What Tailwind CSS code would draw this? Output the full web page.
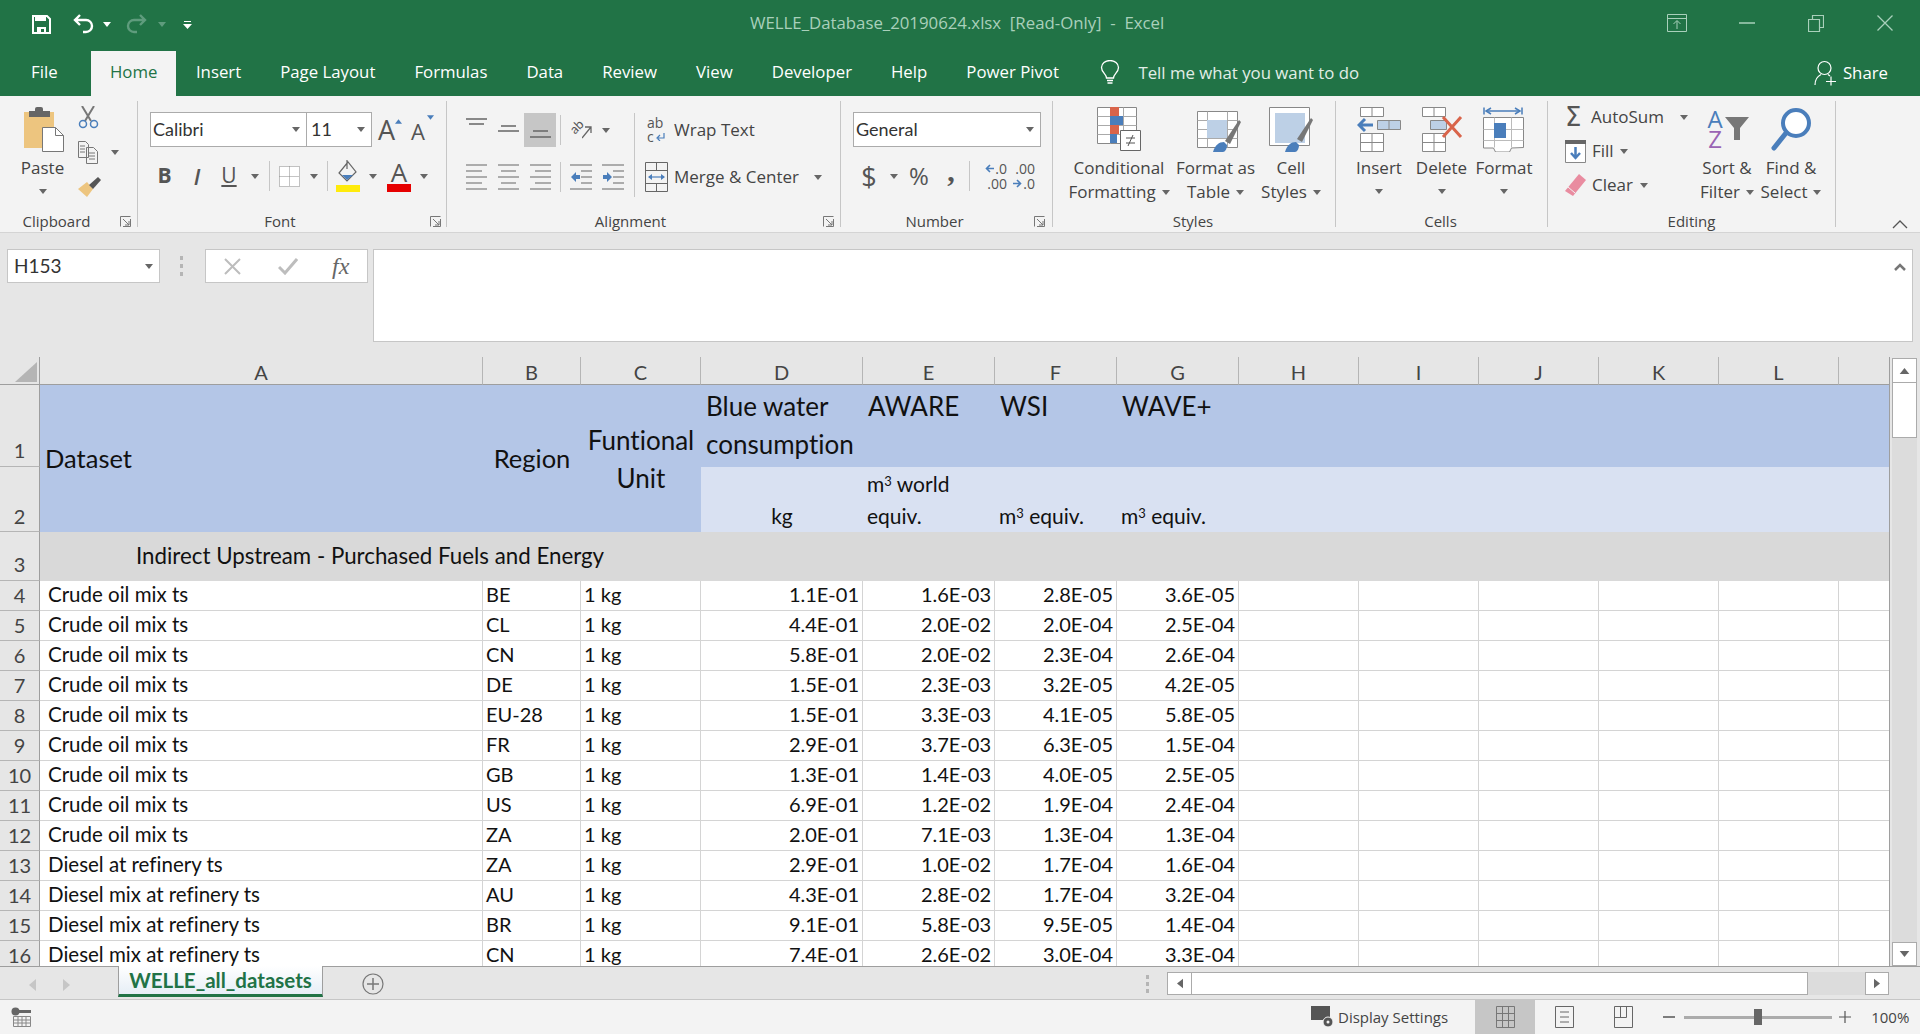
<!DOCTYPE html>
<html lang="en">
<head>
  <meta charset="UTF-8" />
  <title>WELLE_Database_20190624.xlsx [Read-Only] - Excel</title>
  <script src="https://cdn.jsdelivr.net/npm/@tailwindcss/browser@4"></script>
</head>
<body class="bg-[#f3f3f3] overflow-hidden font-['Open_Sans',sans-serif] text-[17px] text-[#444]">
  <!-- shared little glyphs -->
  <svg class="hidden">
    <symbol id="launcher" viewBox="0 0 11 11"><path d="M.5 10.500V.5h10M3 3l6 6M9 5v4H5M10.500 3v7.500H3" fill="none" stroke="#777"/></symbol>
  </svg>

  <div class="flex flex-col w-[1920px] h-[1034px]">
    <!-- title bar -->
    <div class="bg-[#217346] h-[96px] shrink-0 flex flex-col text-white">
      <div class="h-[51px] flex items-center relative">
        <svg class="ml-[32px] w-[19px] h-[19px] -mt-[3px]" viewBox="0 0 19 19"><path d="M1 1h14l3 3v14H1z" fill="none" stroke="#fff" stroke-width="2"/><path d="M3 1h11v5H3zM5 12h9v6h-2v-4H9v4H5z" fill="#fff"/></svg>
        <svg class="ml-[22px] w-[21px] h-[21px] -mt-[3px]" viewBox="0 0 21 21"><path d="M7 1 2 6l5 5M2 6h11a5.500 5.500 0 0 1 0 12h-3" fill="none" stroke="#fff" stroke-width="2.400"/></svg>
        <svg class="ml-[9px] w-[8px] h-[5px] -mt-[2px]"><path d="M0 0h8L4 5z" fill="#fff"/></svg>
        <svg class="ml-[15px] w-[21px] h-[21px] -mt-[3px]" viewBox="0 0 21 21"><path d="M14 1l5 5-5 5M19 6H8a5.500 5.500 0 0 0 0 12h3" fill="none" stroke="#5f9c7d" stroke-width="2.400"/></svg>
        <svg class="ml-[11px] w-[8px] h-[5px] -mt-[2px]"><path d="M0 0h8L4 5z" fill="#5f9c7d"/></svg>
        <svg class="ml-[17px] w-[9px] h-[9px] -mt-[2px]" viewBox="0 0 9 9"><path d="M1 1h7v1H1zM0 4h9L4.500 9z" fill="#fff"/></svg>
        <div class="ml-[558px] -mt-[5px] text-[#a9d0bb] text-[16.800px] whitespace-pre">WELLE_Database_20190624.xlsx  [Read-Only]  -  Excel</div>
        <div class="ml-auto flex items-center -mt-[5px] pr-[27px]">
          <svg class="w-[20px] h-[18px]" viewBox="0 0 20 18"><path d="M.5.500h19v17H.5zM.5 4.500h19M10 15V7M6.500 10 10 6.500l3.500 3.500" fill="none" stroke="#a9d0bb"/></svg>
          <svg class="ml-[52px] w-[16px] h-[2px]" viewBox="0 0 16 2"><path d="M0 1h16" stroke="#a9d0bb" stroke-width="1.500"/></svg>
          <svg class="ml-[53px] w-[16px] h-[17px]" viewBox="0 0 16 17"><path d="M.5 4.500h11v12H.5zM4.500 4.500V.5h11v12h-4" fill="none" stroke="#a9d0bb" stroke-width="1.200"/></svg>
          <svg class="ml-[53px] w-[16px] h-[16px]" viewBox="0 0 16 16"><path d="m.5.500 15 15M15.500.5l-15 15" stroke="#a9d0bb" stroke-width="1.300"/></svg>
        </div>
      </div>
      <div class="h-[45px] flex items-stretch pl-[12px] text-[16.800px] leading-[42px]">
        <div class="w-[79px] pl-[19px]">File</div>
        <div class="px-[19px] bg-[#f3f3f3] text-[#217346]">Home</div>
        <div class="px-[19.500px]">Insert</div>
        <div class="px-[19.500px]">Page Layout</div>
        <div class="px-[19.500px]">Formulas</div>
        <div class="px-[19.500px]">Data</div>
        <div class="px-[19.500px]">Review</div>
        <div class="px-[19.500px]">View</div>
        <div class="px-[19.500px]">Developer</div>
        <div class="px-[19.500px]">Help</div>
        <div class="px-[19.500px]">Power Pivot</div>
        <div class="ml-[22px] flex items-center -mt-[2px]">
          <svg class="w-[20px] h-[26px]" viewBox="0 0 20 26"><path d="M6.500 18c0-4-5-5.500-5-10.500a8.500 7 0 0 1 17 0c0 5-5 6.500-5 10.500z" fill="none" stroke="#fff" stroke-width="1.300"/><path d="M7 20.500h6M7.500 23h5" stroke="#fff" stroke-width="1.500"/></svg>
          <span class="ml-[18px] text-[#e1eee7]">Tell me what you want to do</span>
        </div>
        <div class="ml-auto flex items-center pr-[32px] -mt-[1px]">
          <svg class="w-[22px] h-[26px]" viewBox="0 0 22 26"><circle cx="10.500" cy="8" r="6.500" fill="none" stroke="#fff" stroke-width="1.200"/><path d="M1 25c0-6 3-9 6-10.500M14 14.500l2 1.500M12 21.500h10M17 16.500v9" fill="none" stroke="#fff" stroke-width="1.200"/></svg>
          <span class="ml-[7px]">Share</span>
        </div>
      </div>
    </div>

    <!-- ribbon -->
    <div class="h-[137px] shrink-0 flex border-b border-[#d4d4d4] pt-[5px]">
      <!-- clipboard -->
      <div class="w-[138px] h-[126px] border-r border-[#c6c6c6] shrink-0 flex flex-col">
        <div class="h-[110px] shrink-0 flex">
          <div class="ml-[7px] w-[71px] flex flex-col items-center pt-[6px]">
            <svg class="w-[42px] h-[45px]" viewBox="0 0 42 45"><path d="M2 5h30v36H2z" fill="#edc57f"/><rect x="7" y="4" width="21" height="6" fill="#666"/><rect x="13" y="0" width="8" height="6" rx="2" fill="#666"/><path d="M20.500 20.500h13l8 8v16h-21z" fill="#fff" stroke="#777"/><path d="M33.500 20.500v8h8" fill="none" stroke="#777"/></svg>
            <div class="leading-[24px] mt-[4px]">Paste</div>
            <svg class="w-[8px] h-[5px] mt-[9px]"><path d="M0 0h8L4 5z" fill="#666"/></svg>
          </div>
          <div class="flex flex-col pt-[5px]">
            <svg class="w-[21px] h-[23px]" viewBox="0 0 21 23"><path d="M4 0l9 15M16 0 7 15" stroke="#777" stroke-width="2"/><circle cx="5" cy="18" r="3.500" fill="none" stroke="#4a7ebb" stroke-width="1.500"/><circle cx="16" cy="18" r="3.500" fill="none" stroke="#4a7ebb" stroke-width="1.500"/></svg>
            <div class="flex items-center mt-[12px]">
              <svg class="w-[21px] h-[23px]" viewBox="0 0 21 23"><path d="M.5.500h7l3 3v13h-10zM8.500 6.500h7l4 4v12h-11z" fill="#f3f3f3" stroke="#777"/><path d="M2 5h5M2 8h5M2 11h5M11 12h6M11 15h6M11 18h6" stroke="#777"/></svg>
              <svg class="ml-[12px] w-[8px] h-[5px]"><path d="M0 0h8L4 5z" fill="#666"/></svg>
            </div>
            <svg class="mt-[13px] w-[23px] h-[21px]" viewBox="0 0 23 21"><path d="M0 12 9 5l6 7-6 8z" fill="#edc57f"/><path d="m11 8 9-8 3 3-8 9z" fill="#555"/></svg>
          </div>
        </div>
        <div class="h-[20px] shrink-0 relative flex items-center justify-center text-[15px] pr-[24px]">Clipboard
          <svg class="absolute right-[6px] top-[5px] w-[11px] h-[11px]"><use href="#launcher"/></svg>
        </div>
      </div>

      <!-- font -->
      <div class="w-[309px] h-[126px] border-r border-[#c6c6c6] shrink-0 flex flex-col">
        <div class="h-[110px] shrink-0 pl-[12px] pt-[11px]">
          <div class="flex items-center h-[35px]">
            <div class="w-[157px] h-[35px] bg-white border border-[#ababab] flex items-center justify-between pl-[2px] pr-[6px] text-[#333]"><span class="font-['Lato',sans-serif] text-[18px]">Calibri</span><svg class="w-[8px] h-[5px]"><path d="M0 0h8L4 5z" fill="#666"/></svg></div>
            <div class="w-[65px] h-[35px] bg-white border border-l-0 border-[#ababab] flex items-center justify-between pl-[4px] pr-[6px] text-[#333]"><span class="font-['Lato',sans-serif] text-[18px]">11</span><svg class="w-[8px] h-[5px]"><path d="M0 0h8L4 5z" fill="#666"/></svg></div>
            <div class="ml-[6px] w-[21px] relative text-[27px] text-[#555] leading-none -mt-[1px]">A<svg class="absolute right-[-3px] top-[3px] w-[7px] h-[5px]" viewBox="0 0 8 5"><path d="M0 5h8L4 0z" fill="#4a7ebb"/></svg></div>
            <div class="ml-[12px] w-[20px] relative text-[22px] text-[#555] leading-none pt-[2px]">A<svg class="absolute right-[-3px] top-[-3px] w-[7px] h-[5px]" viewBox="0 0 8 5"><path d="M0 0h8L4 5z" fill="#4a7ebb"/></svg></div>
          </div>
          <div class="flex items-center h-[32px] mt-[13px] -ml-[2px] text-[#555]">
            <div class="w-[33px] text-center font-bold text-[21px]">B</div>
            <div class="w-[32px] text-center italic font-semibold text-[22px]">I</div>
            <div class="w-[32px] text-center underline text-[21px]">U</div>
            <div class="w-[20px] flex justify-center"><svg class="w-[8px] h-[5px]"><path d="M0 0h8L4 5z" fill="#666"/></svg></div>
            <div class="ml-[4px] w-px h-[30px] bg-[#c6c6c6]"></div>
            <svg class="ml-[9px] w-[21px] h-[21px]" viewBox="0 0 21 21"><path d="M.5.500h20v20H.5zM10.500.500v20M.5 10.500h20" fill="#fff" stroke="#888" stroke-dasharray="1 1"/></svg>
            <svg class="ml-[10px] w-[8px] h-[5px]"><path d="M0 0h8L4 5z" fill="#666"/></svg>
            <div class="ml-[9px] w-px h-[30px] bg-[#c6c6c6]"></div>
            <svg class="ml-[8px] w-[24px] h-[32px]" viewBox="0 0 24 32"><path d="M12 2 3 13l8 8 9-9zM11 0v9" fill="none" stroke="#666" stroke-width="1.200"/><path d="M6 15h11l-6 5z" fill="#4a7ebb"/><path d="M0 25h24v7H0z" fill="#ffeb0c"/></svg>
            <svg class="ml-[9px] w-[8px] h-[5px]"><path d="M0 0h8L4 5z" fill="#666"/></svg>
            <div class="ml-[10px] w-[24px] h-[32px] flex flex-col items-center text-[26px] leading-[24px] text-[#555]">A<div class="w-[24px] h-[8px] bg-[#e60000]"></div></div>
            <svg class="ml-[9px] w-[8px] h-[5px]"><path d="M0 0h8L4 5z" fill="#666"/></svg>
          </div>
        </div>
        <div class="h-[20px] shrink-0 relative flex items-center justify-center text-[15px] pr-[24px]">Font
          <svg class="absolute right-[5px] top-[5px] w-[11px] h-[11px]"><use href="#launcher"/></svg>
        </div>
      </div>

      <!-- alignment -->
      <div class="w-[394px] h-[126px] border-r border-[#c6c6c6] shrink-0 flex flex-col">
        <div class="h-[110px] shrink-0 flex pl-[13px] pt-[12px]">
          <div class="w-[175px] flex flex-col border-r border-[#c6c6c6] h-[84px]">
            <div class="flex items-center h-[34px]">
              <div class="w-[32px] h-[34px] flex justify-center items-start pt-[5px]"><svg class="w-[21px] h-[12px]" viewBox="0 0 21 12"><path d="M0 1h21M3 6h15" stroke="#666" stroke-width="1.300"/></svg></div>
              <div class="w-[32px] h-[34px] flex justify-center items-center"><svg class="w-[21px] h-[12px]" viewBox="0 0 21 12"><path d="M3 2h15M0 7h21" stroke="#666" stroke-width="1.300"/></svg></div>
              <div class="w-[32px] h-[34px] bg-[#c6c6c6] flex justify-center items-end pb-[9px]"><svg class="w-[21px] h-[12px]" viewBox="0 0 21 12"><path d="M3 5h15M0 11h21" stroke="#666" stroke-width="1.300"/></svg></div>
              <div class="ml-[4px] w-px h-[30px] bg-[#c6c6c6]"></div>
              <div class="ml-[10px] w-[22px] h-[24px] flex">
                <span class="text-[13px] leading-[15px] text-[#555] -rotate-45 font-['Lato',sans-serif] ml-[2px]">ab</span>
                <svg class="w-[10px] h-[24px] -ml-[5px]" viewBox="0 0 10 24"><path d="M0 20 9 9M9 15V9H3" fill="none" stroke="#666" stroke-width="1.300"/></svg>
              </div>
              <svg class="ml-[9px] w-[8px] h-[5px]"><path d="M0 0h8L4 5z" fill="#666"/></svg>
            </div>
            <div class="flex items-center h-[32px] mt-[14px]">
              <div class="w-[32px] flex justify-center"><svg class="w-[21px] h-[26px]" viewBox="0 0 21 26"><path d="M0 1h21M0 7h16M0 13h21M0 19h16M0 25h21" stroke="#666" stroke-width="1.200"/></svg></div>
              <div class="w-[32px] flex justify-center"><svg class="w-[21px] h-[26px]" viewBox="0 0 21 26"><path d="M0 1h21M3 7h15M0 13h21M3 19h15M0 25h21" stroke="#666" stroke-width="1.200"/></svg></div>
              <div class="w-[32px] flex justify-center"><svg class="w-[21px] h-[26px]" viewBox="0 0 21 26"><path d="M0 1h21M5 7h16M0 13h21M5 19h16M0 25h21" stroke="#666" stroke-width="1.200"/></svg></div>
              <div class="ml-[4px] w-px h-[30px] bg-[#c6c6c6]"></div>
              <svg class="ml-[9px] w-[22px] h-[26px]" viewBox="0 0 22 26"><path d="M0 1h22M11 7h11M11 13h11M11 19h11M0 25h22" stroke="#666" stroke-width="1.200"/><path d="M6 8 1 13l5 5v-3h4v-4H6z" fill="#4a7ebb"/></svg>
              <svg class="ml-[10px] w-[22px] h-[26px]" viewBox="0 0 22 26"><path d="M0 1h22M11 7h11M11 13h11M11 19h11M0 25h22" stroke="#666" stroke-width="1.200"/><path d="M5 8l5 5-5 5v-3H1v-4h4z" fill="#4a7ebb"/></svg>
            </div>
          </div>
          <div class="flex flex-col pl-[10px]">
            <div class="flex items-center h-[34px] pl-[2px]">
              <div class="w-[20px] h-[28px] flex flex-col text-[14px] leading-[14px] text-[#555]">
                <span>ab</span>
                <div class="flex items-center">c<svg class="ml-[2px] w-[9px] h-[8px]" viewBox="0 0 9 8"><path d="M8 0v5H2M4 2 1 5l3 3" fill="none" stroke="#4a7ebb" stroke-width="1.200"/></svg></div>
              </div>
              <span class="ml-[7px]">Wrap Text</span>
            </div>
            <div class="flex items-center h-[32px] mt-[14px]">
              <svg class="w-[23px] h-[30px]" viewBox="0 0 23 30"><path d="M.5.500h22v29H.5zM.5 8.500h22M.5 21.500h22M11.500.500v8M11.500 21.500v8" fill="none" stroke="#666"/><path d="M4 15h15" stroke="#4a7ebb" stroke-width="1.200"/><path d="M7 12l-4 3 4 3zM16 12l4 3-4 3z" fill="#4a7ebb"/></svg>
              <span class="ml-[6px]">Merge &amp; Center</span>
              <svg class="ml-[15px] w-[8px] h-[5px]"><path d="M0 0h8L4 5z" fill="#666"/></svg>
            </div>
          </div>
        </div>
        <div class="h-[20px] shrink-0 relative flex items-center justify-center text-[15px] pr-[26px]">Alignment
          <svg class="absolute right-[6px] top-[5px] w-[11px] h-[11px]"><use href="#launcher"/></svg>
        </div>
      </div>

      <!-- number -->
      <div class="w-[212px] h-[126px] border-r border-[#c6c6c6] shrink-0 flex flex-col">
        <div class="h-[110px] shrink-0 pl-[12px] pt-[11px]">
          <div class="w-[188px] h-[35px] bg-white border border-[#ababab] flex items-center justify-between pl-[2px] pr-[6px] text-[#333]"><span class="font-['Lato',sans-serif] text-[18px]">General</span><svg class="w-[8px] h-[5px]"><path d="M0 0h8L4 5z" fill="#666"/></svg></div>
          <div class="flex items-center h-[32px] mt-[13px] text-[#555]">
            <div class="w-[32px] text-center text-[27px] leading-none">$</div>
            <svg class="ml-[5px] w-[8px] h-[5px]"><path d="M0 0h8L4 5z" fill="#666"/></svg>
            <div class="ml-[6px] w-[30px] text-center text-[24px] leading-none">%</div>
            <div class="ml-[7px] w-[20px] text-center text-[30px] font-bold leading-none -mt-[10px] font-['Liberation_Serif',serif]">,</div>
            <div class="ml-[8px] w-px h-[30px] bg-[#c6c6c6]"></div>
            <div class="ml-[9px] w-[28px] flex flex-col items-end text-[14px] leading-[15px] whitespace-nowrap">
              <div class="flex items-center"><svg class="w-[9px] h-[9px] mr-[1px]" viewBox="0 0 9 9"><path d="M9 4.500H2M5 1 1.500 4.500 5 8" fill="none" stroke="#4a7ebb" stroke-width="1.600"/></svg>.0</div>
              <div>.00</div>
            </div>
            <div class="ml-[2px] w-[26px] flex flex-col items-end text-[14px] leading-[15px] whitespace-nowrap">
              <div>.00</div>
              <div class="flex items-center"><svg class="w-[9px] h-[9px] mr-[1px]" viewBox="0 0 9 9"><path d="M0 4.500h7M4 1l3.500 3.500L4 8" fill="none" stroke="#4a7ebb" stroke-width="1.600"/></svg>.0</div>
            </div>
          </div>
        </div>
        <div class="h-[20px] shrink-0 relative flex items-center justify-center text-[15px] pr-[24px]">Number
          <svg class="absolute right-[7px] top-[5px] w-[11px] h-[11px]"><use href="#launcher"/></svg>
        </div>
      </div>

      <!-- styles -->
      <div class="w-[283px] h-[126px] border-r border-[#c6c6c6] shrink-0 flex flex-col">
        <div class="h-[110px] shrink-0 flex pl-[17px] pt-[6px] text-center leading-[24px]">
          <div class="w-[98px] flex flex-col items-center">
            <svg class="w-[44px] h-[45px]" viewBox="0 0 44 45"><path d="M.5.500h39v36H.5z" fill="#fff" stroke="#888"/><path d="M.5 9.500h39M.5 18.500h39M.5 27.500h39M13.500.500v36M26.500.500v36" stroke="#aaa"/><path d="M13 0h9v9h-9z M13 18h9v9h-9z" fill="#d9644a"/><path d="M13 9h13v9H13zM13 27h7v9h-7z" fill="#4a7ebb"/><path d="M23.500 23.500h20v20h-20z" fill="#fff" stroke="#666"/><path d="M29 31h9M29 36h9M36 28l-5 11" stroke="#555"/></svg>
            <div class="mt-[4px]">Conditional</div>
            <div class="flex items-center whitespace-nowrap">Formatting<svg class="ml-[6px] w-[8px] h-[5px]"><path d="M0 0h8L4 5z" fill="#666"/></svg></div>
          </div>
          <div class="w-[95px] flex flex-col items-center">
            <svg class="w-[44px] h-[45px] ml-[6px]" viewBox="0 0 44 45"><path d="M.5 4.500h40v36H.5z" fill="#fff" stroke="#888"/><path d="M.5 13.500h40M.5 22.500h40M.5 31.500h40M10.500 4.500v36M30.500 4.500v36" stroke="#aaa"/><path d="M10 13h20v18H10z" fill="#bdd0e6"/><path d="m28 34 14-21 2 2-11 22z" fill="#777"/><path d="M16 45c2-7 6-10 11-10l3 3c0 4-2 7-4 7z" fill="#4a7ebb"/></svg>
            <div class="mt-[4px] whitespace-nowrap">Format as</div>
            <div class="flex items-center">Table<svg class="ml-[6px] w-[8px] h-[5px]"><path d="M0 0h8L4 5z" fill="#666"/></svg></div>
          </div>
          <div class="w-[56px] flex flex-col items-center">
            <svg class="w-[44px] h-[45px]" viewBox="0 0 44 45"><path d="M.5.500h40v38H.5z" fill="#fff" stroke="#888"/><path d="M6 6h30v30H6z" fill="#bdd0e6"/><path d="m28 32 14-21 2 2-11 22z" fill="#777"/><path d="M16 45c2-7 6-10 11-10l3 3c0 4-2 7-4 7z" fill="#4a7ebb"/></svg>
            <div class="mt-[4px]">Cell</div>
            <div class="flex items-center">Styles<svg class="ml-[6px] w-[8px] h-[5px]"><path d="M0 0h8L4 5z" fill="#666"/></svg></div>
          </div>
        </div>
        <div class="h-[20px] shrink-0 flex items-center justify-center text-[15px] pr-[2px]">Styles</div>
      </div>

      <!-- cells -->
      <div class="w-[212px] h-[126px] border-r border-[#c6c6c6] shrink-0 flex flex-col">
        <div class="h-[110px] shrink-0 flex pl-[12px] pt-[6px] text-center leading-[24px]">
          <div class="w-[62px] flex flex-col items-center">
            <svg class="w-[44px] h-[45px]" viewBox="0 0 44 45"><path d="M3.500.500h23v9h-23zM15 .5v9M3.500 26.500h23v18h-23zM15 26.500v18M3.500 35.500h23" fill="#fff" stroke="#888"/><path d="M20.500 13.500h23v9h-23zM32 13.500v9" fill="#bdd0e6" stroke="#888"/><path d="M16 18H4M8 12l-6 6 6 6" fill="none" stroke="#4a7ebb" stroke-width="3"/></svg>
            <div class="mt-[4px]">Insert</div>
            <svg class="mt-[9px] w-[8px] h-[5px]"><path d="M0 0h8L4 5z" fill="#666"/></svg>
          </div>
          <div class="w-[63px] flex flex-col items-center">
            <svg class="w-[44px] h-[45px]" viewBox="0 0 44 45"><path d="M2.500.500h23v9h-23zM14 .5v9M2.500 26.500h23v18h-23zM14 26.500v18M2.500 35.500h23" fill="#fff" stroke="#888"/><path d="M10.500 13.500h16v9h-16z" fill="#bdd0e6" stroke="#888"/><path d="m23 10 18 20M41 10 23 30" stroke="#d9644a" stroke-width="3"/></svg>
            <div class="mt-[4px]">Delete</div>
            <svg class="mt-[9px] w-[8px] h-[5px]"><path d="M0 0h8L4 5z" fill="#666"/></svg>
          </div>
          <div class="w-[62px] flex flex-col items-center">
            <svg class="w-[42px] h-[45px]" viewBox="0 0 42 45"><path d="M4 4h32M1 .5v7M39 .5v7" stroke="#4a7ebb" stroke-width="1.500"/><path d="M8 1 3 4l5 3M32 1l5 3-5 3" fill="none" stroke="#4a7ebb" stroke-width="1.500"/><path d="M.5 10.500h40v30l-12 .5-2 4h-14l-2-4h-10z" fill="#fff" stroke="#888"/><path d="M.5 22.500h40M.5 33.500h40M11.500 10.500v30M28.500 10.500v30" stroke="#bbb"/><path d="M11 16h12v15H11z" fill="#4a7ebb"/></svg>
            <div class="mt-[4px]">Format</div>
            <svg class="mt-[9px] w-[8px] h-[5px]"><path d="M0 0h8L4 5z" fill="#666"/></svg>
          </div>
        </div>
        <div class="h-[20px] shrink-0 flex items-center justify-center text-[15px] pr-[2px]">Cells</div>
      </div>

      <!-- editing -->
      <div class="w-[288px] h-[126px] border-r border-[#c6c6c6] shrink-0 flex flex-col">
        <div class="h-[110px] shrink-0 flex">
          <div class="w-[147px] pl-[17px] flex flex-col -mt-[1px]">
            <div class="h-[34px] flex items-center">
              <span class="w-[19px] text-[26px] leading-none text-[#555] font-['DejaVu_Sans',sans-serif]">Σ</span>
              <span class="ml-[7px]">AutoSum</span>
              <svg class="ml-[16px] w-[8px] h-[5px]"><path d="M0 0h8L4 5z" fill="#666"/></svg>
            </div>
            <div class="h-[34px] flex items-center">
              <svg class="w-[21px] h-[23px]" viewBox="0 0 21 23"><path d="M.5.500h20v22H.5z" fill="#fff" stroke="#888"/><path d="M0 0h21v4H0z" fill="#666"/><path d="M10.500 7v11M6 13l4.500 5 4.500-5" fill="none" stroke="#4a7ebb" stroke-width="2.500"/></svg>
              <span class="ml-[6px]">Fill</span>
              <svg class="ml-[6px] w-[8px] h-[5px]"><path d="M0 0h8L4 5z" fill="#666"/></svg>
            </div>
            <div class="h-[34px] flex items-center">
              <svg class="w-[21px] h-[22px]" viewBox="0 0 21 22"><path d="M0 17 14 0l7 6L8 22z" fill="#e98ca0"/><path d="m3 13 7 6" stroke="#f3f3f3"/></svg>
              <span class="ml-[6px]">Clear</span>
              <svg class="ml-[7px] w-[8px] h-[5px]"><path d="M0 0h8L4 5z" fill="#666"/></svg>
            </div>
          </div>
          <div class="w-[64px] flex flex-col items-center text-center leading-[24px] pt-[6px]">
            <div class="w-[44px] h-[45px] flex">
              <div class="w-[20px] flex flex-col text-[24px] leading-[20px] pt-[2px] text-center">
                <span class="text-[#4a7ebb]">A</span>
                <span class="text-[#9a64b4]">Z</span>
              </div>
              <svg class="w-[24px] h-[45px]" viewBox="0 0 24 45"><path d="M0 10h24l-9 11v12H9V21z" fill="#777"/></svg>
            </div>
            <div class="mt-[4px]">Sort &amp;</div>
            <div class="flex items-center">Filter<svg class="ml-[6px] w-[8px] h-[5px]"><path d="M0 0h8L4 5z" fill="#666"/></svg></div>
          </div>
          <div class="w-[64px] flex flex-col items-center text-center leading-[24px] pt-[6px]">
            <svg class="w-[44px] h-[45px]" viewBox="0 0 44 45"><circle cx="27" cy="16" r="13" fill="#fff" stroke="#4a7ebb" stroke-width="4"/><path d="M17 26 5 41" stroke="#4a7ebb" stroke-width="5" stroke-linecap="round"/></svg>
            <div class="mt-[4px]">Find &amp;</div>
            <div class="flex items-center">Select<svg class="ml-[6px] w-[8px] h-[5px]"><path d="M0 0h8L4 5z" fill="#666"/></svg></div>
          </div>
        </div>
        <div class="h-[20px] shrink-0 flex items-center justify-center text-[15px]">Editing</div>
      </div>
      <div class="flex-1 flex justify-end items-end pr-[12px] pb-[3px]">
        <svg class="w-[16px] h-[9px]" viewBox="0 0 16 9"><path d="m1 8 7-7 7 7" fill="none" stroke="#555" stroke-width="1.300"/></svg>
      </div>
    </div>

    <!-- formula bar -->
    <div class="h-[124px] shrink-0 bg-[#e6e6e6] pt-[16px] flex items-start">
      <div class="ml-[7px] w-[153px] h-[34px] bg-white border border-[#c6c6c6] flex items-center justify-between pl-[6px] pr-[6px]"><span class="font-['Lato',sans-serif] text-[19px] text-[#333]">H153</span><svg class="w-[8px] h-[5px]"><path d="M0 0h8L4 5z" fill="#666"/></svg></div>
      <div class="ml-[20px] mt-[7px] flex flex-col gap-[4px]"><div class="w-[3px] h-[4px] bg-[#b5b5b5]"></div><div class="w-[3px] h-[4px] bg-[#b5b5b5]"></div><div class="w-[3px] h-[4px] bg-[#b5b5b5]"></div></div>
      <div class="ml-[22px] w-[163px] h-[34px] bg-white border border-[#c6c6c6] flex items-center">
        <svg class="ml-[18px] w-[17px] h-[17px]" viewBox="0 0 17 17"><path d="m1 1 15 15M16 1 1 16" stroke="#bdbdbd" stroke-width="2"/></svg>
        <svg class="ml-[37px] w-[20px] h-[17px]" viewBox="0 0 20 17"><path d="m1 9 6 6L19 1" fill="none" stroke="#bdbdbd" stroke-width="3"/></svg>
        <span class="ml-[34px] italic font-['Liberation_Serif',serif] text-[24px] text-[#666] leading-none">fx</span>
      </div>
      <div class="ml-[5px] w-[1540px] h-[93px] bg-white border border-[#c6c6c6] flex justify-end pr-[6px] pt-[13px]">
        <svg class="w-[12px] h-[8px]" viewBox="0 0 12 8"><path d="m1 7 5-5 5 5" fill="none" stroke="#777" stroke-width="2.500"/></svg>
      </div>
    </div>

    <!-- sheet + vertical scrollbar -->
    <div class="h-[610px] shrink-0 flex border-b border-[#9e9e9e] overflow-hidden">
      <div class="w-[1890px] shrink-0 bg-white border-r border-[#9e9e9e] overflow-hidden">
        <div id="sheet" class="grid grid-cols-[40px_443px_98px_120px_162px_132px_122px_122px_120px_120px_120px_120px_120px_50px] grid-rows-[28px_82px_65px_49px] auto-rows-[30px] font-['Lato',sans-serif] text-[20px] text-[#111] [font-variant-ligatures:none]"></div>
      </div>
      <div class="flex-1 bg-[#e6e6e6] pl-[2px] pr-[3px] pt-[1px] flex flex-col">
        <div class="h-[25px] bg-white border border-[#ababab] flex items-center justify-center"><svg class="w-[11px] h-[6px]" viewBox="0 0 8 5"><path d="M0 5h8L4 0z" fill="#666"/></svg></div>
        <div class="h-[55px] bg-white border border-t-0 border-[#ababab]"></div>
        <div class="flex-1 bg-[#dcdcdc]"></div>
        <div class="h-[24px] bg-white border border-[#ababab] flex items-center justify-center"><svg class="w-[11px] h-[6px]" viewBox="0 0 8 5"><path d="M0 0h8L4 5z" fill="#666"/></svg></div>
      </div>
    </div>

    <!-- sheet tabs + horizontal scrollbar -->
    <div class="h-[33px] shrink-0 bg-[#e6e6e6] border-b border-[#c6c6c6] flex items-start">
      <svg class="ml-[29px] mt-[12px] w-[7px] h-[12px]" viewBox="0 0 7 12"><path d="M7 0v12L0 6z" fill="#c6c6c6"/></svg>
      <svg class="ml-[27px] mt-[12px] w-[7px] h-[12px]" viewBox="0 0 7 12"><path d="M0 0v12l7-6z" fill="#c6c6c6"/></svg>
      <div class="ml-[48px] w-[205px] h-[31px] bg-linear-to-b from-white to-[#e6eef6] border-x border-[#9e9e9e] border-b-[3px] border-b-[#217346] -mt-px pt-[1px] flex items-center justify-center font-['Lato',sans-serif] font-bold text-[20.500px] text-[#217346]">WELLE_all_datasets</div>
      <svg class="ml-[39px] mt-[6px] w-[22px] h-[22px]" viewBox="0 0 22 22"><circle cx="11" cy="11" r="10" fill="none" stroke="#777" stroke-width="1.200"/><path d="M11 5v12M5 11h12" stroke="#777" stroke-width="1.500"/></svg>
      <div class="ml-[762px] mt-[8px] flex flex-col gap-[3px]"><div class="w-[3px] h-[4px] bg-[#b5b5b5]"></div><div class="w-[3px] h-[4px] bg-[#b5b5b5]"></div><div class="w-[3px] h-[4px] bg-[#b5b5b5]"></div></div>
      <div class="ml-[18px] mt-[5px] w-[722px] h-[23px] flex bg-[#dcdcdc]">
        <div class="w-[25px] bg-white border border-[#ababab] flex items-center justify-center"><svg class="w-[6px] h-[11px]" viewBox="0 0 5 8"><path d="M5 0v8L0 4z" fill="#666"/></svg></div>
        <div class="w-[616px] bg-white border border-l-0 border-[#ababab]"></div>
        <div class="flex-1"></div>
        <div class="w-[24px] bg-white border border-[#ababab] flex items-center justify-center"><svg class="w-[6px] h-[11px]" viewBox="0 0 5 8"><path d="M0 0v8l5-4z" fill="#666"/></svg></div>
      </div>
    </div>

    <!-- status bar -->
    <div class="flex-1 flex items-center text-[15px]">
      <svg class="ml-[11px] w-[20px] h-[20px]" viewBox="0 0 20 20"><circle cx="4.500" cy="4.500" r="4" fill="#666"/><path d="M8 3h12v3H8z" fill="#666"/><path d="M2.500 9.500h17v10h-17zM2.500 13h17M2.500 16h17M7 9.500v10M11 9.500v10M15 9.500v10" fill="#f3f3f3" stroke="#888"/></svg>
      <svg class="ml-[1280px] w-[24px] h-[24px]" viewBox="0 0 24 24"><path d="M0 1h19v14H0zM4 19h6" fill="#555"/><circle cx="17" cy="17" r="5" fill="#555" stroke="#f3f3f3"/><circle cx="17" cy="17" r="1.500" fill="#f3f3f3"/></svg>
      <span class="ml-[3px]">Display Settings</span>
      <div class="ml-[27px] w-[60px] h-full bg-[#c6c6c6] flex items-center justify-center">
        <svg class="w-[19px] h-[22px]" viewBox="0 0 19 22"><path d="M.5.500h18v21H.5zM.5 7.500h18M.5 14.500h18M6.500.500v21M12.500.500v21" fill="none" stroke="#777"/></svg>
      </div>
      <svg class="ml-[20px] w-[19px] h-[22px]" viewBox="0 0 19 22"><path d="M.5.500h18v21H.5zM5 6h9M5 11h9M5 16h9" fill="none" stroke="#666"/></svg>
      <svg class="ml-[40px] w-[19px] h-[22px]" viewBox="0 0 19 22"><path d="M.5.500h18v21H.5zM.5 11.500h12M6.500.500v11M12.500.500v11" fill="none" stroke="#666"/></svg>
      <svg class="ml-[30px] w-[12px] h-[2px]" viewBox="0 0 12 2"><path d="M0 1h12" stroke="#555" stroke-width="1.500"/></svg>
      <div class="ml-[9px] w-[148px] h-[3px] bg-[#ababab] flex items-center justify-center"><div class="w-[8px] h-[16px] bg-[#666]"></div></div>
      <svg class="ml-[7px] w-[12px] h-[12px]" viewBox="0 0 12 12"><path d="M0 6h12M6 0v12" stroke="#555" stroke-width="1.200"/></svg>
      <span class="ml-[20px]">100%</span>
    </div>
  </div>

  <script>
    const hdr = ['A','B','C','D','E','F','G','H','I','J','K','L'];
    const data = [
      ['Crude oil mix ts','BE','1.1E-01','1.6E-03','2.8E-05','3.6E-05'],
      ['Crude oil mix ts','CL','4.4E-01','2.0E-02','2.0E-04','2.5E-04'],
      ['Crude oil mix ts','CN','5.8E-01','2.0E-02','2.3E-04','2.6E-04'],
      ['Crude oil mix ts','DE','1.5E-01','2.3E-03','3.2E-05','4.2E-05'],
      ['Crude oil mix ts','EU-28','1.5E-01','3.3E-03','4.1E-05','5.8E-05'],
      ['Crude oil mix ts','FR','2.9E-01','3.7E-03','6.3E-05','1.5E-04'],
      ['Crude oil mix ts','GB','1.3E-01','1.4E-03','4.0E-05','2.5E-05'],
      ['Crude oil mix ts','US','6.9E-01','1.2E-02','1.9E-04','2.4E-04'],
      ['Crude oil mix ts','ZA','2.0E-01','7.1E-03','1.3E-04','1.3E-04'],
      ['Diesel at refinery ts','ZA','2.9E-01','1.0E-02','1.7E-04','1.6E-04'],
      ['Diesel mix at refinery ts','AU','4.3E-01','2.8E-02','1.7E-04','3.2E-04'],
      ['Diesel mix at refinery ts','BR','9.1E-01','5.8E-03','9.5E-05','1.4E-04'],
      ['Diesel mix at refinery ts','CN','7.4E-01','2.6E-02','3.0E-04','3.3E-04']
    ];
    const rowHead = 'bg-[#e6e6e6] border-b border-r border-b-[#b5b5b5] border-r-[#9e9e9e] flex justify-center text-[#444]';
    const sup = '<span class="text-[13px] leading-[0] relative -top-[6px]">3</span>';
    let html = '<div class="bg-[#e6e6e6] border-b border-r border-[#9e9e9e] flex items-end justify-end pr-[2px] pb-[2px]"><svg class="w-[22px] h-[20px]" viewBox="0 0 22 20"><path d="M22 0v20H0z" fill="#b5b5b5"/></svg></div>';
    hdr.forEach(l => {
      html += `<div class="bg-[#e6e6e6] border-b border-r border-b-[#9e9e9e] border-r-[#b5b5b5] flex items-center justify-center text-[#444] pt-[2px]">${l}</div>`;
    });
    html += '<div class="bg-[#e6e6e6] border-b border-b-[#9e9e9e]"></div>';

    // rows 1 and 2, with the merged blue headings
    html += `<div class="${rowHead} items-end pb-[1px]">1</div>`;
    html += '<div class="row-span-2 bg-[#b4c6e7] flex items-center pl-[5px] text-[25.500px]">Dataset</div>';
    html += '<div class="row-span-2 bg-[#b4c6e7] flex items-center justify-center text-[25.500px]">Region</div>';
    html += '<div class="row-span-2 bg-[#b4c6e7] flex items-center justify-center text-center text-[26px] leading-[38px] whitespace-nowrap">Funtional<br>Unit</div>';
    html += '<div class="bg-[#b4c6e7] pl-[5px] pt-[2px] text-[26px] leading-[38px]">Blue water<br>consumption</div>';
    html += '<div class="bg-[#b4c6e7] pl-[5px] pt-[2px] text-[26px] leading-[38px]">AWARE</div>';
    html += '<div class="bg-[#b4c6e7] pl-[5px] pt-[2px] text-[26px] leading-[38px]">WSI</div>';
    html += '<div class="bg-[#b4c6e7] pl-[5px] pt-[2px] text-[26px] leading-[38px]">WAVE+</div>';
    html += '<div class="col-span-6 bg-[#b4c6e7]"></div>';
    html += `<div class="${rowHead} items-end pb-[0px]">2</div>`;
    html += '<div class="bg-[#d9e1f2] flex items-end justify-center text-[21px] leading-[32px]">kg</div>';
    html += `<div class="bg-[#d9e1f2] flex items-end pl-[4px] text-[21px] leading-[32px] whitespace-nowrap"><div>m${sup} world<br>equiv.</div></div>`;
    html += `<div class="bg-[#d9e1f2] flex items-end pl-[4px] text-[21px] leading-[32px] whitespace-nowrap"><div>m${sup} equiv.</div></div>`;
    html += `<div class="bg-[#d9e1f2] flex items-end pl-[4px] text-[21px] leading-[32px] whitespace-nowrap"><div>m${sup} equiv.</div></div>`;
    html += '<div class="col-span-6 bg-[#d9e1f2]"></div>';

    // row 3, grey band across the sheet
    html += `<div class="${rowHead} items-end pb-[1px]">3</div>`;
    html += '<div class="col-span-13 bg-[#d9d9d9] flex items-center pl-[96px] text-[22.300px] pb-[2px]">Indirect Upstream - Purchased Fuels and Energy</div>';

    const cell = 'border-b border-r border-[#d4d4d4] flex items-center whitespace-nowrap overflow-hidden pb-[3px]';
    data.forEach((r, i) => {
      html += `<div class="${rowHead} items-center pb-[2px]">${i + 4}</div>`;
      html += `<div class="${cell} pl-[8px] text-[20.500px]">${r[0]}</div>`;
      html += `<div class="${cell} pl-[3px]">${r[1]}</div>`;
      html += `<div class="${cell} pl-[3px]">1 kg</div>`;
      for (let c = 2; c < 6; c++) html += `<div class="${cell} justify-end pr-[3px]">${r[c]}</div>`;
      for (let c = 0; c < 5; c++) html += `<div class="${cell}"></div>`;
      html += '<div class="border-b border-[#d4d4d4]"></div>';
    });
    document.getElementById('sheet').innerHTML = html;
  </script>
</body>
</html>
